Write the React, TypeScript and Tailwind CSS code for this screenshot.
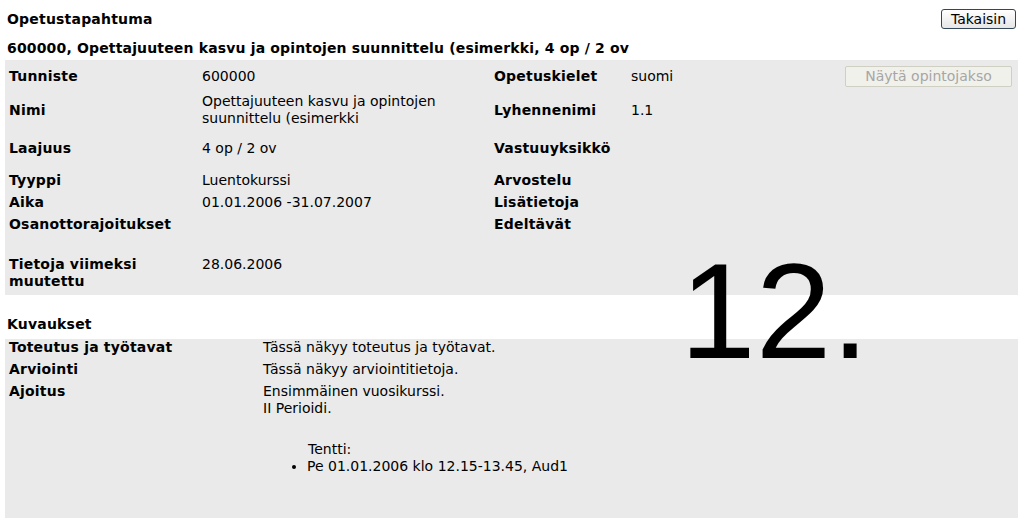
import React from "react"

const font = { fontFamily: '"DejaVu Sans", Verdana, sans-serif' }

function InfoRow({
  h,
  align = "items-center",
  label,
  value,
  label2,
  value2,
  extra,
}: {
  h: string
  align?: string
  label?: React.ReactNode
  value?: React.ReactNode
  label2?: React.ReactNode
  value2?: React.ReactNode
  extra?: React.ReactNode
}) {
  return (
    <div className={`grid grid-cols-[193px_292px_137px_1fr] ${align} ${h}`}>
      <div className="font-bold tracking-[0.2px]">{label}</div>
      <div>{value}</div>
      <div className="font-bold tracking-[0.2px]">{label2}</div>
      <div className="flex items-center justify-between">
        <span>{value2}</span>
        {extra}
      </div>
    </div>
  )
}

function DescRow({ label, children }: { label: string; children: React.ReactNode }) {
  return (
    <div className="grid grid-cols-[254px_1fr] items-start min-h-[22px]">
      <div className="font-bold tracking-[0.2px]">{label}</div>
      <div>{children}</div>
    </div>
  )
}

export default function App() {
  return (
    <div
      className="relative w-[1023px] h-[524px] overflow-hidden bg-white text-black text-[14px] leading-[17px] px-[5px]"
      style={font}
    >
      {/* header */}
      <div className="flex items-center justify-between pt-[9px] h-[29px]">
        <h1 className="pl-[2px] font-bold tracking-[0.2px]">Opetustapahtuma</h1>
        <button className="h-[20px] w-[75px] mr-[2px] rounded-[3px] border border-[#34465a] bg-gradient-to-b from-white to-[#e6e6e6] text-[14px] leading-none">
          Takaisin
        </button>
      </div>
      <h2 className="pl-[2px] pt-[11px] pb-[3px] font-bold tracking-[0.16px]">
        600000, Opettajuuteen kasvu ja opintojen suunnittelu (esimerkki, 4 op / 2 ov
      </h2>

      {/* perustiedot */}
      <div className="bg-[#eaeaea] pl-[4px] pr-[6px] pb-[4px]">
        <InfoRow
          h="h-[32px]"
          label="Tunniste"
          value="600000"
          label2="Opetuskielet"
          value2="suomi"
          extra={
            <button
              disabled
              className="h-[21px] w-[167px] rounded-[2px] border border-[#cfcfc4] bg-[#f1f1ec] text-[#a6a6a6] leading-none"
            >
              Näytä opintojakso
            </button>
          }
        />
        <InfoRow
          h="h-[36px]"
          label="Nimi"
          value={<span className="block pr-[30px]">Opettajuuteen kasvu ja opintojen suunnittelu (esimerkki</span>}
          label2="Lyhennenimi"
          value2="1.1"
        />
        <InfoRow h="h-[41px]" label="Laajuus" value="4 op / 2 ov" label2="Vastuuyksikkö" />
        <InfoRow h="h-[22px]" label="Tyyppi" value="Luentokurssi" label2="Arvostelu" />
        <InfoRow h="h-[22px]" label="Aika" value="01.01.2006 -31.07.2007" label2="Lisätietoja" />
        <InfoRow h="h-[22px]" label="Osanottorajoitukset" label2="Edeltävät" />
        <div className="h-[21px]" />
        <InfoRow
          h="h-[35px]"
          align="items-start"
          label={
            <span>
              Tietoja viimeksi
              <br />
              muutettu
            </span>
          }
          value="28.06.2006"
        />
      </div>

      {/* kuvaukset */}
      <h3 className="pl-[2px] pt-[21px] pb-[6px] font-bold tracking-[0.2px]">Kuvaukset</h3>
      <div className="bg-[#eaeaea] pl-[4px] h-[179px]">
        <DescRow label="Toteutus ja työtavat">Tässä näkyy toteutus ja työtavat.</DescRow>
        <DescRow label="Arviointi">Tässä näkyy arviointitietoja.</DescRow>
        <DescRow label="Ajoitus">
          <div>
            Ensimmäinen vuosikurssi.
            <br />
            II Perioidi.
          </div>
          <div className="mt-[24px] ml-[45px]">Tentti:</div>
          <ul className="list-disc ml-[44px]">
            <li>Pe 01.01.2006 klo 12.15-13.45, Aud1</li>
          </ul>
        </DescRow>
      </div>

      {/* annotation overlay */}
      <div
        className="absolute left-[680px] top-[243px] text-[136px] leading-none text-black"
        style={{ fontFamily: '"Liberation Sans", Arial, sans-serif' }}
      >
        12.
      </div>
    </div>
  )
}
